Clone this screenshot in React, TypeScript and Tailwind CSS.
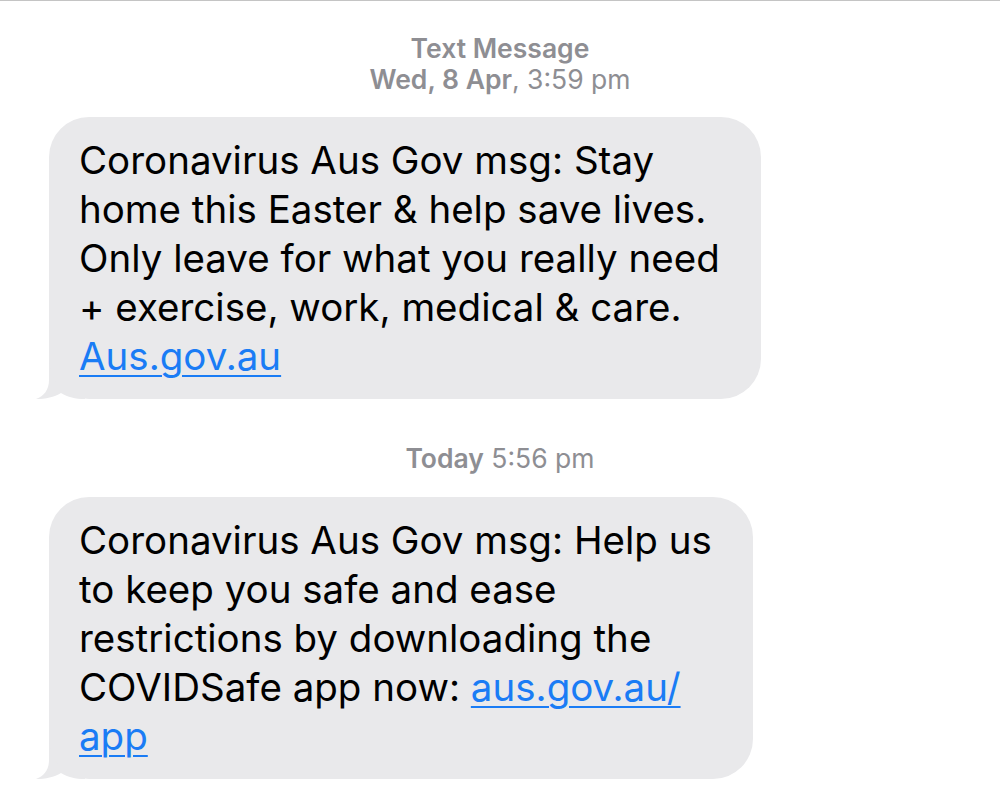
import React from 'react';

interface MessageProps {
  lines: React.ReactNode[];
}

const Tail = () => (
  <svg
    className="absolute left-[-14px] bottom-0"
    width="50"
    height="49"
    viewBox="0 0 50 49"
    fill="#e9e9eb"
  >
    <path d="M14 0 L14 30 C14 40 9 46 1 49 C11 49 19 47 26 43 C33 47 40 49 50 49 L50 0 Z" />
  </svg>
);

const Bubble = ({ lines }: MessageProps) => (
  <div className="relative ml-[49px] w-fit">
    <Tail />
    <div className="relative rounded-[40px] bg-[#e9e9eb] pl-[30px] pr-[41px] pt-[19px] pb-[18px] text-[38.5px] leading-[49px] text-black">
      {lines.map((line, i) => (
        <div key={i} className="whitespace-nowrap">
          {line}
        </div>
      ))}
    </div>
  </div>
);

const Link = ({ children }: { children: React.ReactNode }) => (
  <span className="text-[#1a7cf5] underline decoration-2 underline-offset-[5px]">{children}</span>
);

const App = () => {
  return (
    <div className="w-[1000px] h-[793px] overflow-hidden bg-white border-t border-[#c4c4c4] font-['Inter',sans-serif]">
      <div className="mt-[32px] text-center text-[26.5px] leading-[31px] text-[#8e8e93]">
        <div className="font-semibold">Text Message</div>
        <div>
          <span className="font-semibold">Wed, 8 Apr</span>, 3:59 pm
        </div>
      </div>

      <div className="mt-[22px]">
        <Bubble
          lines={[
            'Coronavirus Aus Gov msg: Stay',
            'home this Easter & help save lives.',
            'Only leave for what you really need',
            '+ exercise, work, medical & care.',
            <Link>Aus.gov.au</Link>,
          ]}
        />
      </div>

      <div className="mt-[44px] text-center text-[26.5px] leading-[31px] text-[#8e8e93]">
        <span className="font-semibold">Today</span> 5:56 pm
      </div>

      <div className="mt-[23px]">
        <Bubble
          lines={[
            'Coronavirus Aus Gov msg: Help us',
            'to keep you safe and ease',
            'restrictions by downloading the',
            <>
              COVIDSafe app now: <Link>aus.gov.au/</Link>
            </>,
            <Link>app</Link>,
          ]}
        />
      </div>
    </div>
  );
};

export default App;
